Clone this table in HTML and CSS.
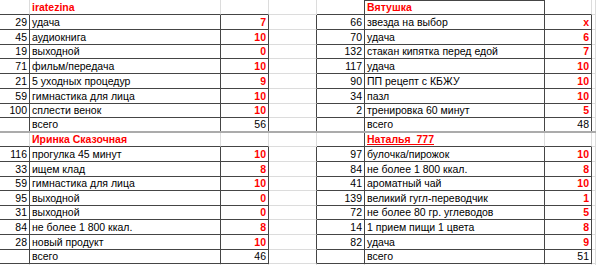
FILE: index.html
```html
<!DOCTYPE html>
<html>

<head>
    <meta charset="utf-8">
    <title>марафон</title>
    <link rel="stylesheet" href="styles.css">
</head>

<body>
    <div class="sheet">
        <table class="band band-top">
            <colgroup>
                <col class="c-num"><col class="c-task"><col class="c-score"><col class="c-gap">
                <col class="c-num2"><col class="c-task2"><col class="c-score2"><col class="c-end">
            </colgroup>
            <tr class="head">
                <td class="hd"></td><td class="hd name">iratezina</td><td class="hd"></td><td></td>
                <td class="hd side"></td><td class="hd name boxed">Вятушка</td><td class="hd"></td><td></td>
            </tr>
            <tr>
                <td class="num">29</td><td class="task">удача</td><td class="score">7</td><td class="gap"></td>
                <td class="num">66</td><td class="task">звезда на выбор</td><td class="score">x</td><td></td>
            </tr>
            <tr>
                <td class="num">45</td><td class="task">аудиокнига</td><td class="score">10</td><td class="gap"></td>
                <td class="num">70</td><td class="task">удача</td><td class="score">6</td><td></td>
            </tr>
            <tr>
                <td class="num">19</td><td class="task">выходной</td><td class="score">0</td><td class="gap"></td>
                <td class="num">132</td><td class="task">стакан кипятка перед едой</td><td class="score">7</td><td></td>
            </tr>
            <tr>
                <td class="num">71</td><td class="task">фильм/передача</td><td class="score">10</td><td class="gap"></td>
                <td class="num">117</td><td class="task">удача</td><td class="score">10</td><td></td>
            </tr>
            <tr>
                <td class="num">21</td><td class="task">5 уходных процедур</td><td class="score">9</td><td class="gap"></td>
                <td class="num">90</td><td class="task">ПП рецепт с КБЖУ</td><td class="score">10</td><td></td>
            </tr>
            <tr>
                <td class="num">59</td><td class="task">гимнастика для лица</td><td class="score">10</td><td class="gap"></td>
                <td class="num">34</td><td class="task">пазл</td><td class="score">10</td><td></td>
            </tr>
            <tr>
                <td class="num">100</td><td class="task">сплести венок</td><td class="score">10</td><td class="gap"></td>
                <td class="num">2</td><td class="task">тренировка 60 минут</td><td class="score">5</td><td></td>
            </tr>
            <tr class="total">
                <td class="num"></td><td class="task">всего</td><td class="sum">56</td><td class="gap"></td>
                <td class="num"></td><td class="task">всего</td><td class="sum">48</td><td></td>
            </tr>
        </table>

        <div class="split"></div>

        <table class="band band-bottom">
            <colgroup>
                <col class="c-num"><col class="c-task"><col class="c-score"><col class="c-gap">
                <col class="c-num2"><col class="c-task2"><col class="c-score2"><col class="c-end">
            </colgroup>
            <tr class="head">
                <td class="hd"></td><td class="hd name">Иринка Сказочная</td><td class="hd"></td><td></td>
                <td class="hd side"></td><td class="hd name link">Наталья_777</td><td class="hd"></td><td></td>
            </tr>
            <tr>
                <td class="num">116</td><td class="task">прогулка 45 минут</td><td class="score">10</td><td class="gap"></td>
                <td class="num">97</td><td class="task">булочка/пирожок</td><td class="score">10</td><td></td>
            </tr>
            <tr>
                <td class="num">33</td><td class="task">ищем клад</td><td class="score">8</td><td class="gap"></td>
                <td class="num">84</td><td class="task">не более 1 800 ккал.</td><td class="score">8</td><td></td>
            </tr>
            <tr>
                <td class="num">59</td><td class="task">гимнастика для лица</td><td class="score">10</td><td class="gap"></td>
                <td class="num">41</td><td class="task">ароматный чай</td><td class="score">10</td><td></td>
            </tr>
            <tr>
                <td class="num">95</td><td class="task">выходной</td><td class="score">0</td><td class="gap"></td>
                <td class="num">139</td><td class="task">великий гугл-переводчик</td><td class="score">1</td><td></td>
            </tr>
            <tr>
                <td class="num">31</td><td class="task">выходной</td><td class="score">0</td><td class="gap"></td>
                <td class="num">72</td><td class="task">не более 80 гр. углеводов</td><td class="score">5</td><td></td>
            </tr>
            <tr>
                <td class="num">84</td><td class="task">не более 1 800 ккал.</td><td class="score">8</td><td class="gap"></td>
                <td class="num">14</td><td class="task">1 прием пищи 1 цвета</td><td class="score">8</td><td></td>
            </tr>
            <tr>
                <td class="num">28</td><td class="task">новый продукт</td><td class="score">10</td><td class="gap"></td>
                <td class="num">82</td><td class="task">удача</td><td class="score">9</td><td></td>
            </tr>
            <tr>
                <td class="num"></td><td class="task">всего</td><td class="sum">46</td><td class="gap"></td>
                <td class="num"></td><td class="task">всего</td><td class="sum">51</td><td></td>
            </tr>
            <tr class="rest">
                <td></td><td></td><td></td><td></td><td></td><td></td><td></td><td></td>
            </tr>
        </table>
    </div>
</body>

</html>
```

FILE: styles.css
```css
/* sheet colours */
:root {
    --grid: #dcdcdc;
    --line: #454545;
    --red: #ff0000;
    --split: #ababab;
}

body {
    margin: 0;
    background: #ffffff;
    font-family: 'Liberation Sans', Arial, sans-serif;
    font-size: 10.5px;
    color: #000000;
}

.sheet {
    width: 596px;
    height: 265px;
    overflow: hidden;
}

.band {
    width: 596px;
    table-layout: fixed;
    border-collapse: separate;
    border-spacing: 0;
}

.c-num { width: 30px; }
.c-task { width: 191px; }
.c-score { width: 48px; }
.c-gap { width: 48px; }
.c-num2 { width: 48px; }
.c-task2 { width: 180px; }
.c-score2 { width: 47px; }
.c-end { width: 4px; }

td {
    box-sizing: border-box;
    padding: 0 2px 1px;
    border-right: 1px solid var(--grid);
    border-bottom: 1px solid var(--grid);
    vertical-align: bottom;
    line-height: 12px;
    white-space: nowrap;
    overflow: hidden;
}

.band-top tr { height: 14.75px; }
.band-top tr.total { height: 13px; }
.band-top tr.total td { border-bottom: none; }

.band-bottom tr { height: 14.625px; }
.band-bottom tr.head { height: 13px; }
.band-bottom tr.rest { height: 4px; }

.split {
    height: 2px;
    background: var(--split);
}

.hd {
    border-bottom-color: var(--line);
}

.side,
.boxed {
    border-right-color: var(--line);
}

.band-top .boxed {
    border-top: 1px solid var(--line);
}

.name {
    font-weight: bold;
    color: var(--red);
}

.link {
    text-decoration: underline;
}

.num,
.task,
.score,
.sum {
    border-right-color: var(--line);
    border-bottom-color: var(--line);
}

.num,
.score,
.sum {
    text-align: right;
}

.score {
    font-weight: bold;
    color: var(--red);
}

.gap {
    border-right-color: var(--line);
}
```
